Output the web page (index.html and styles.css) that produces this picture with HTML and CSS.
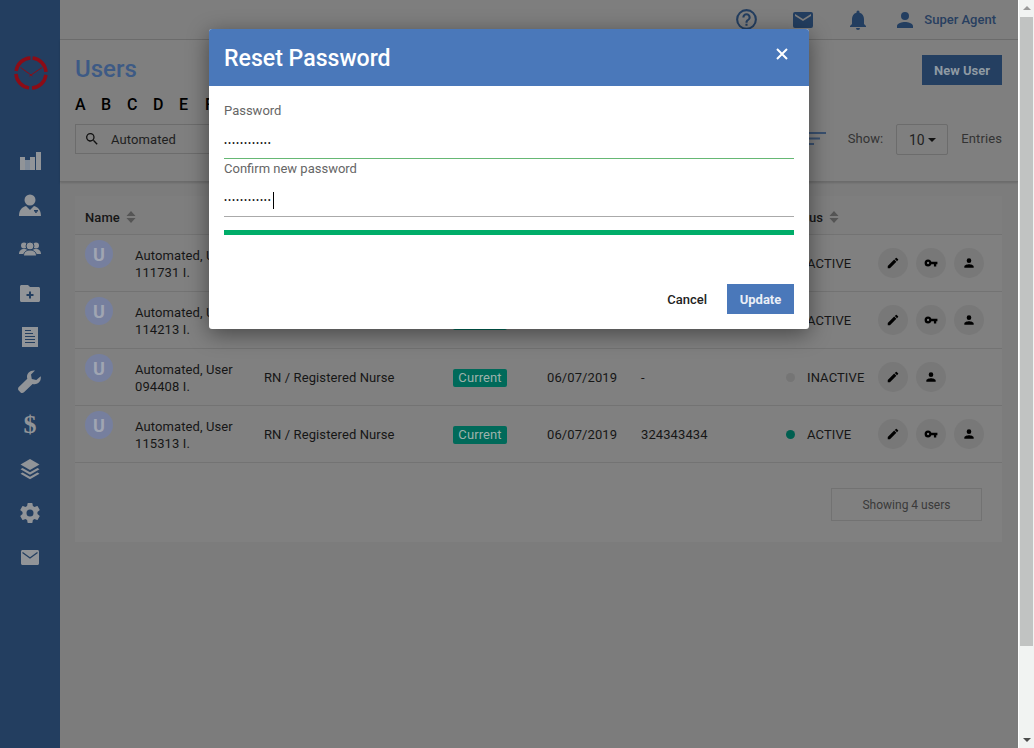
FILE: index.html
```html
<!DOCTYPE html>
<html lang="en">
<head>
<meta charset="utf-8">
<title>Users</title>
<link rel="stylesheet" href="styles.css">
</head>
<body>
<svg class="defs" width="0" height="0" aria-hidden="true">
  <symbol id="i-edit" viewBox="0 0 24 24"><path d="M3 17.25V21h3.75L17.81 9.94l-3.75-3.75L3 17.25zM20.71 7.04a1 1 0 0 0 0-1.41l-2.34-2.34a1 1 0 0 0-1.41 0l-1.83 1.83 3.75 3.75 1.83-1.83z"/></symbol>
  <symbol id="i-key" viewBox="0 0 24 24"><path d="M12.65 10A6 6 0 0 0 7 6a6 6 0 0 0 0 12 6 6 0 0 0 5.65-4H17v4h4v-4h2v-4H12.65zM7 14a2 2 0 1 1 0-4 2 2 0 0 1 0 4z"/></symbol>
  <symbol id="i-person" viewBox="0 0 24 24"><path d="M12 12a4 4 0 1 0 0-8 4 4 0 0 0 0 8zm0 2c-2.67 0-8 1.34-8 4v2h16v-2c0-2.66-5.33-4-8-4z"/></symbol>
  <symbol id="i-mail" viewBox="0 0 24 24"><path d="M20 4H4a2 2 0 0 0-2 2v12a2 2 0 0 0 2 2h16a2 2 0 0 0 2-2V6a2 2 0 0 0-2-2zm0 4-8 5-8-5V6l8 5 8-5v2z"/></symbol>
  <symbol id="i-sort" viewBox="0 0 10 12"><path d="M5 0l4.500 5H.5zM5 12L.5 7h9z"/></symbol>
</svg>

<div class="page">
  <aside class="sidebar">
    <svg class="logo" viewBox="0 0 34 34" width="34" height="34">
      <circle cx="17" cy="17" r="15" fill="none" stroke="#8c0c16" stroke-width="3.500" stroke-dasharray="20.600 3" transform="rotate(-84 17 17)"/>
      <path d="M6.500 11.500L18.500 20M28 11.500L15.500 20" fill="none" stroke="#8c0c16" stroke-width="1"/>
    </svg>
    <nav class="side-nav">
      <span class="side-item"><svg viewBox="0 0 21 18" width="21" height="18"><path class="s" d="M0 5h5v13H0zM10 5h5v13h-5zM16 0h5v18h-5z"/><path class="s2" d="M5 8h5v10H5z"/></svg></span>
      <span class="side-item"><svg viewBox="0 0 22 22" width="22" height="22"><circle class="s" cx="11" cy="6" r="5.500"/><path class="s" d="M0 22c0-6 3-9 7-10l4 4 4-4c4 1 7 4 7 10z"/><path class="cut" d="M15 16h4v1.500h-1.300V19h-1.500v-1.500H15z"/></svg></span>
      <span class="side-item"><svg viewBox="0 0 22 14" width="22" height="14"><circle class="s" cx="5" cy="3.500" r="3"/><circle class="s" cx="17" cy="3.500" r="3"/><path class="s" d="M0 12c0-3 2-5 5-5s5 2 5 5zM12 12c0-3 2-5 5-5s5 2 5 5z"/><circle class="s" cx="11" cy="4" r="4" stroke="#233e60"/><path class="s" d="M4.500 14c0-4 3-6 6.500-6s6.500 2 6.500 6z" stroke="#233e60"/></svg></span>
      <span class="side-item"><svg viewBox="0 0 20 17" width="20" height="17"><path class="s" d="M0 1.500C0 .7.700 0 1.500 0H8l2 2h8.500c.8 0 1.500.7 1.500 1.500v12c0 .8-.7 1.500-1.500 1.500h-17C.7 17 0 16.300 0 15.500z"/><path class="cut" d="M9 6.500h2V9h2.500v2H11v2.500H9V11H6.500V9H9z"/></svg></span>
      <span class="side-item"><svg viewBox="0 0 16 20" width="16" height="20"><path class="s" d="M0 0h16v20H0z"/><path class="cut" d="M3 3h6v1H3zM3 6h8v1H3zM3 9h10v1H3zM3 12h10v1H3zM3 15h10v1H3z"/></svg></span>
      <span class="side-item"><svg viewBox="0 0 24 24" width="24" height="24"><path class="s" d="M22.700 7.300c.5 2.500-.2 4.800-1.900 6.300-1.700 1.500-4 2-6.200 1.300L6 23.200c-1 1-2.500 1-3.400.2l-1.900-1.900c-.9-.9-.9-2.400.1-3.400l8.500-8.300C8.600 7.500 9.100 5.200 10.700 3.500 12.300 1.900 14.600 1.200 17 1.600l-4 4 .8 4.500 4.500.9z"/></svg></span>
      <span class="side-item dollar">$</span>
      <span class="side-item"><svg viewBox="0 0 20 21" width="20" height="21"><path class="s" d="M10 0l9.500 5.500L10 11 .5 5.500z"/><path class="s" d="M2.500 9L.5 10.200 10 15.700l9.500-5.500L17.500 9 10 13.300z"/><path class="s" d="M2.500 13.500L.5 14.700 10 20.200l9.500-5.500-2-1.200L10 17.800z"/></svg></span>
      <span class="side-item"><svg viewBox="0 0 24 24" width="24" height="24"><path class="s" d="M19.430 12.980c.04-.32.07-.64.07-.98s-.03-.66-.07-.98l2.110-1.650a.5.500 0 0 0 .12-.64l-2-3.460a.5.500 0 0 0-.61-.22l-2.490 1a7.300 7.300 0 0 0-1.690-.98l-.38-2.650A.49.490 0 0 0 14 2h-4a.49.490 0 0 0-.49.420l-.38 2.650c-.61.250-1.170.590-1.690.98l-2.490-1a.49.490 0 0 0-.61.220l-2 3.460a.49.490 0 0 0 .12.640l2.110 1.650c-.04.320-.07.650-.07.980s.03.660.07.980l-2.110 1.650a.5.500 0 0 0-.12.640l2 3.460c.12.220.39.300.61.220l2.490-1c.52.400 1.080.730 1.690.98l.38 2.650c.03.240.24.420.49.420h4c.25 0 .46-.18.490-.42l.38-2.650c.61-.25 1.170-.59 1.690-.98l2.490 1c.23.090.49 0 .61-.22l2-3.460a.5.500 0 0 0-.12-.64l-2.110-1.650zM12 15.500a3.500 3.500 0 1 1 0-7 3.500 3.500 0 0 1 0 7z"/></svg></span>
      <span class="side-item"><svg viewBox="0 0 18 15" width="18" height="15"><path class="s" d="M1.500 0h15c.8 0 1.500.7 1.500 1.500v12c0 .8-.7 1.500-1.500 1.500h-15C.7 15 0 14.300 0 13.500v-12C0 .7.700 0 1.500 0z"/><path d="M1.500 2.500L9 8l7.500-5.500" fill="none" stroke="#233e60" stroke-width="1.300"/></svg></span>
    </nav>
  </aside>

  <main class="main">
    <header class="topbar">
      <svg class="top-icon help" viewBox="0 0 24 24" width="25" height="25"><path d="M11 18h2v-2h-2v2zm1-16a10 10 0 1 0 0 20 10 10 0 0 0 0-20zm0 18a8 8 0 1 1 0-16 8 8 0 0 1 0 16zm0-14a4 4 0 0 0-4 4h2a2 2 0 1 1 4 0c0 2-3 1.750-3 5h2c0-2.250 3-2.500 3-5a4 4 0 0 0-4-4z"/></svg>
      <svg class="top-icon mail" width="24" height="24"><use href="#i-mail"/></svg>
      <svg class="top-icon bell" viewBox="0 0 24 24" width="24" height="24"><path d="M12 22a2 2 0 0 0 2-2h-4a2 2 0 0 0 2 2zm6-6v-5c0-3.070-1.640-5.640-4.500-6.320V4a1.500 1.500 0 0 0-3 0v.68C7.630 5.360 6 7.920 6 11v5l-2 2v1h16v-1l-2-2z"/></svg>
      <svg class="top-icon person" width="24" height="24"><use href="#i-person"/></svg>
      <span class="agent">Super Agent</span>
    </header>

    <section class="toolbar">
      <div class="title-row">
        <h1 class="title">Users</h1>
        <button class="new-user" type="button">New User</button>
      </div>
      <div class="letters">
        <span>A</span><span>B</span><span>C</span><span>D</span><span>E</span><span>F</span>
      </div>
      <div class="filter-row">
        <div class="search">
          <svg viewBox="0 0 24 24" width="16" height="16"><path d="M15.500 14h-.79l-.28-.27a6.500 6.500 0 1 0-.7.7l.27.28v.79l5 4.990L20.490 19l-4.990-5zm-6 0a4.500 4.500 0 1 1 0-9 4.500 4.500 0 0 1 0 9z"/></svg>
          <span>Automated</span>
        </div>
        <svg class="sort-lines" viewBox="0 0 18 14" width="18" height="14"><path d="M0 0h18v2H0zM0 5.500h12v2H0zM0 11h6v2H0z"/></svg>
        <span class="show">Show:</span>
        <span class="page-size">10<i class="caret-down"></i></span>
        <span class="entries">Entries</span>
      </div>
    </section>

    <section class="card">
      <div class="grid-row head">
        <span class="th">Name <svg class="sort" width="10" height="12"><use href="#i-sort"/></svg></span>
        <span class="th">Title <svg class="sort" width="10" height="12"><use href="#i-sort"/></svg></span>
        <span class="th">Type</span>
        <span class="th">Date</span>
        <span class="th">Phone</span>
        <span class="th">Status <svg class="sort" width="10" height="12"><use href="#i-sort"/></svg></span>
      </div>

      <div class="grid-row">
        <div class="name-cell"><span class="avatar">U</span><span class="name">Automated, User<br>111731 I.</span></div>
        <span>RN / Registered Nurse</span><span><b class="badge">Current</b></span><span>06/07/2019</span><span>-</span>
        <div class="status-cell"><i class="dot on"></i><span class="status">ACTIVE</span>
          <div class="actions"><span class="act"><svg width="14" height="14"><use href="#i-edit"/></svg></span><span class="act"><svg width="14" height="14"><use href="#i-key"/></svg></span><span class="act"><svg width="14" height="14"><use href="#i-person"/></svg></span></div></div>
      </div>
      <div class="grid-row">
        <div class="name-cell"><span class="avatar">U</span><span class="name">Automated, User<br>114213 I.</span></div>
        <span>RN / Registered Nurse</span><span><b class="badge">Current</b></span><span>06/07/2019</span><span>-</span>
        <div class="status-cell"><i class="dot on"></i><span class="status">ACTIVE</span>
          <div class="actions"><span class="act"><svg width="14" height="14"><use href="#i-edit"/></svg></span><span class="act"><svg width="14" height="14"><use href="#i-key"/></svg></span><span class="act"><svg width="14" height="14"><use href="#i-person"/></svg></span></div></div>
      </div>
      <div class="grid-row">
        <div class="name-cell"><span class="avatar">U</span><span class="name">Automated, User<br>094408 I.</span></div>
        <span>RN / Registered Nurse</span><span><b class="badge">Current</b></span><span>06/07/2019</span><span>-</span>
        <div class="status-cell"><i class="dot off"></i><span class="status">INACTIVE</span>
          <div class="actions"><span class="act"><svg width="14" height="14"><use href="#i-edit"/></svg></span><span class="act"><svg width="14" height="14"><use href="#i-person"/></svg></span></div></div>
      </div>
      <div class="grid-row">
        <div class="name-cell"><span class="avatar">U</span><span class="name">Automated, User<br>115313 I.</span></div>
        <span>RN / Registered Nurse</span><span><b class="badge">Current</b></span><span>06/07/2019</span><span>324343434</span>
        <div class="status-cell"><i class="dot on"></i><span class="status">ACTIVE</span>
          <div class="actions"><span class="act"><svg width="14" height="14"><use href="#i-edit"/></svg></span><span class="act"><svg width="14" height="14"><use href="#i-key"/></svg></span><span class="act"><svg width="14" height="14"><use href="#i-person"/></svg></span></div></div>
      </div>

      <div class="card-foot"><span class="showing">Showing 4 users</span></div>
    </section>
  </main>

  <div class="scrollbar">
    <i class="arrow up"></i>
    <div class="track"><div class="thumb"></div></div>
    <i class="arrow down"></i>
  </div>
</div>

<div class="modal" role="dialog" aria-label="Reset Password">
  <div class="modal-head">
    <h2>Reset Password</h2>
    <svg class="close" viewBox="0 0 14 14" width="14" height="14"><path d="M2 2l10 10M12 2L2 12"/></svg>
  </div>
  <div class="modal-body">
    <label class="label">Password</label>
    <div class="pw green">••••••••••••</div>
    <label class="label second">Confirm new password</label>
    <div class="pw grey">••••••••••••<i class="text-caret"></i></div>
    <div class="strength"></div>
    <div class="modal-actions">
      <button class="cancel" type="button">Cancel</button>
      <button class="update" type="button">Update</button>
    </div>
  </div>
</div>
</body>
</html>
```

FILE: styles.css
```css
* { box-sizing: border-box; }
html, body { margin: 0; height: 100%; overflow: hidden; }
body { font-family: Roboto, "Liberation Sans", sans-serif; font-size: 13px; color: #111; background: #7c7c7c; }
.defs { position: absolute; }

.page { display: flex; height: 748px; }

/* Sidebar */
.sidebar { width: 60px; flex: none; background: #233e60; display: flex; flex-direction: column; align-items: center; padding-top: 56px; }
.logo { display: block; margin-left: 2px; }
.side-nav { margin-top: 49px; display: flex; flex-direction: column; width: 100%; }
.side-item { height: 44px; display: flex; align-items: center; justify-content: center; }
.s { fill: #919498; }
.s2 { fill: #7f8a98; }
.cut { fill: #233e60; }
.dollar { color: #919498; font: 700 26px "Liberation Serif", serif; }

/* Main */
.main { width: 958px; flex: none; display: flex; flex-direction: column; }
.topbar { height: 40px; border-bottom: 1px solid #6c6c6c; background: #7e7e7e; display: flex; align-items: center; justify-content: flex-end; padding-right: 22px; }
.top-icon { fill: #233e60; display: block; }
.help { margin-right: 32px; }
.mail { margin-right: 31px; }
.bell { margin-right: 23px; }
.person { margin-right: 7px; }
.agent { color: #283f60; font-weight: 500; font-size: 13px; }

.toolbar { height: 142px; background: #7f7f7f; border-bottom: 1px solid #6c6c6c; box-shadow: 0 1px 2px rgba(0,0,0,.15); padding: 15px 16px 0 15px; }
.title-row { display: flex; align-items: center; justify-content: space-between; height: 30px; }
.title { margin: -2px 0 0; font-size: 24px; font-weight: 500; color: #3d5a85; }
.new-user { width: 80px; height: 30px; border: 0; padding: 0; background: #243f61; color: #8f9aa3; font: 700 13px Roboto, sans-serif; }
.letters { display: flex; margin-top: 9px; height: 20px; align-items: center; font-size: 16px; font-weight: 500; color: #000; }
.letters span { width: 26px; flex: none; }
.filter-row { display: flex; align-items: flex-start; margin-top: 10px; }
.search { width: 400px; height: 30px; border: 1px solid #6c6c6c; display: flex; align-items: center; padding-left: 8px; gap: 11px; color: #1e1e1e; letter-spacing: .1px; }
.search svg { fill: #111; }
.sort-lines { fill: #39506f; margin: 8px 0 0 333px; }
.show { margin-left: 22px; color: #333; line-height: 30px; letter-spacing: .1px; }
.page-size { width: 52px; height: 31px; margin-left: 13px; border: 1px solid #6c6c6c; border-radius: 2px; display: flex; align-items: center; justify-content: center; gap: 3px; font-size: 14px; color: #222; }
.caret-down { width: 0; height: 0; border: 4px solid transparent; border-top-color: #111; border-bottom: 0; }
.entries { margin-left: 13px; line-height: 30px; color: #333; letter-spacing: .1px; }

/* Table card */
.card { margin: 14px 16px 0 15px; height: 346px; background: #808080; }
.grid-row { display: grid; grid-template-columns: 179px 189px 94px 94px 144px 217px; height: 57px; align-items: center; padding-left: 10px; border-bottom: 1px solid #737373; color: #161616; letter-spacing: .1px; }
.head { height: 39px; padding-top: 4px; background: #7e7e7e; }
.th { display: flex; align-items: center; gap: 6px; font-weight: 500; }
.sort { fill: #555; display: block; }
.name-cell { display: flex; gap: 22px; align-self: start; padding-top: 5px; }
.avatar { width: 28px; height: 28px; border-radius: 50%; background: #767f9e; color: #a0a5b2; font-size: 18px; font-weight: 700; display: flex; align-items: center; justify-content: center; flex: none; }
.name { line-height: 17px; padding-top: 6.5px; }
.badge { display: inline-block; width: 54px; line-height: 18px; margin-top: 2px; text-align: center; font-weight: 400; border-radius: 2px; background: #006a5a; color: #9db2ac; vertical-align: middle; }
.status-cell { display: flex; align-items: center; }
.dot { width: 9px; height: 9px; border-radius: 50%; margin: 0 12px 0 1px; flex: none; }
.dot.on { background: #005f50; }
.dot.off { background: #757575; }
.status { width: 71px; flex: none; }
.actions { display: flex; gap: 8px; }
.act { width: 30px; height: 30px; border-radius: 50%; background: #787878; display: flex; align-items: center; justify-content: center; fill: #000; }
.card-foot { display: flex; justify-content: flex-end; padding: 25px 20px 0 0; }
.showing { width: 151px; height: 33px; border: 1px solid #727272; display: flex; align-items: center; justify-content: center; font-size: 12px; color: #3a3a3a; }

/* Scrollbar */
.scrollbar { width: 16px; flex: none; background: #f1f3f2; display: flex; flex-direction: column; align-items: center; padding: 6px 0; border-left: 1px solid #fff; }
.arrow { width: 0; height: 0; border: 4px solid transparent; flex: none; }
.arrow.up { border-bottom-color: #9a9a9a; border-top: 0; }
.arrow.down { border-top-color: #4c4c4c; border-bottom: 0; }
.track { flex: 1; width: 100%; padding: 7px 1px 0 1px; }
.thumb { height: 629px; background: #c1c3c2; }

/* Modal */
.modal { position: absolute; left: 209px; top: 29px; width: 600px; height: 300px; background: #fff; border-radius: 3px; box-shadow: 0 5px 22px rgba(0,0,0,.45); overflow: hidden; }
.modal-head { height: 57px; background: #4a78ba; display: flex; align-items: center; justify-content: space-between; padding: 2px 20px 0 15px; }
.modal-head h2 { margin: 0; color: #fff; font-size: 23.1px; font-weight: 500; }
.close { fill: none; stroke: #fff; stroke-width: 2; margin-top: -10px; }
.modal-body { padding: 16px 15px 0 15px; }
.label { display: block; color: #666; font-size: 13px; line-height: 17px; }
.label.second { margin-top: 1px; }
.pw { position: relative; height: 40px; padding-top: 15px; font-size: 9px; letter-spacing: .95px; line-height: 16px; color: #111; border-bottom: 1px solid; }
.pw.green { padding-top: 16px; border-bottom-color: #66b874; }
.pw.grey { border-bottom-color: #aaa; }
.text-caret { display: inline-block; width: 1px; height: 17px; background: #000; margin-left: 1px; vertical-align: middle; }
.strength { height: 5px; margin-top: 13px; background: #00ad69; }
.modal-actions { display: flex; justify-content: flex-end; align-items: center; margin-top: 49px; gap: 20px; }
.cancel { border: 0; background: none; padding: 0; font: 500 13px Roboto, sans-serif; color: #222; }
.update { width: 67px; height: 30px; border: 0; padding: 0; background: #4a78ba; color: #e9eef6; font: 700 13px Roboto, sans-serif; }
```
